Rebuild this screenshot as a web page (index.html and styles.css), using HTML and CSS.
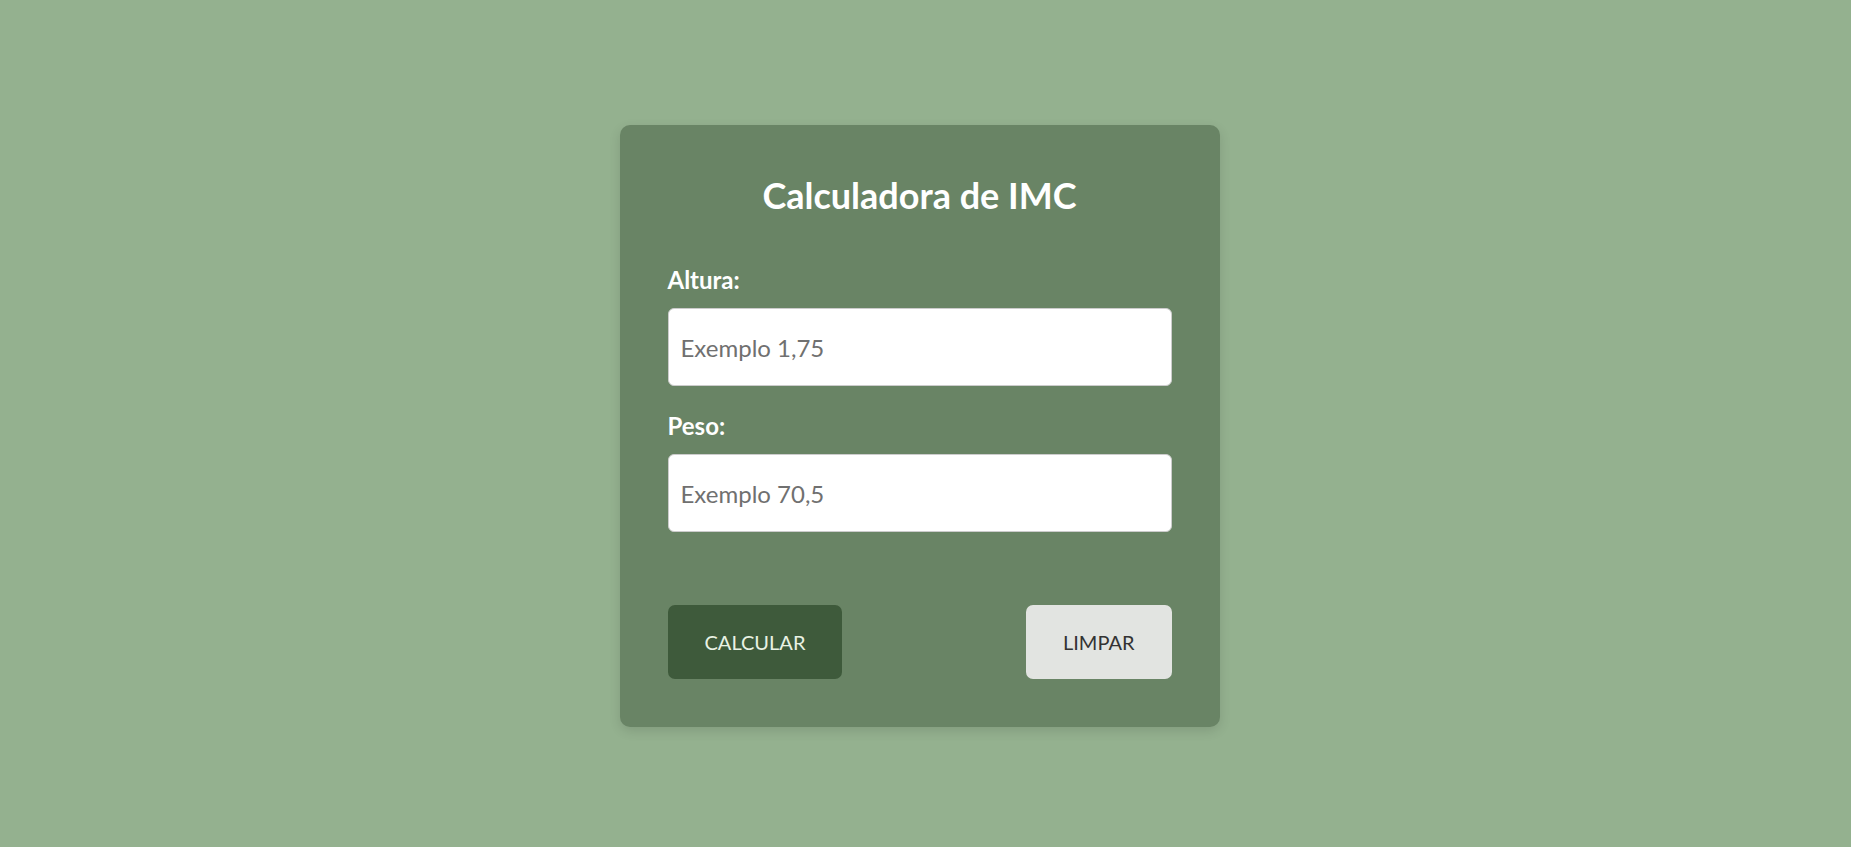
FILE: index.html
```html
<!DOCTYPE html>
<html lang="pt-BR">
<head>
<meta charset="utf-8">
<title>Calculadora de IMC</title>
<link rel="stylesheet" href="styles.css">
</head>
<body>
<main class="page">
  <section class="card">
    <h1 class="title">Calculadora de IMC</h1>
    <div class="field">
      <label class="label" for="altura">Altura:</label>
      <input class="input" id="altura" type="text" placeholder="Exemplo 1,75">
    </div>
    <div class="field">
      <label class="label" for="peso">Peso:</label>
      <input class="input" id="peso" type="text" placeholder="Exemplo 70,5">
    </div>
    <div class="actions">
      <button class="btn btn-primary" type="button">CALCULAR</button>
      <button class="btn btn-secondary" type="button">LIMPAR</button>
    </div>
  </section>
</main>
</body>
</html>
```
FILE: styles.css
```css
* { box-sizing: border-box; }
html, body { margin: 0; padding: 0; }
body {
  background: #94b18f;
  font-family: Lato, "Open Sans", sans-serif;
  min-height: 847px;
}
.page {
  display: flex;
  justify-content: center;
  padding-top: 125px;
  padding-right: 12px;
}
.card {
  width: 600px;
  background: #698465;
  border-radius: 10px;
  padding: 49px 48px 48px;
  box-shadow: 0 4px 12px rgba(0,0,0,0.12);
}
.title {
  margin: 0 0 47px;
  text-align: center;
  color: #fff;
  font-size: 36px;
  font-weight: 700;
  line-height: 1.2;
}
.field {
  display: flex;
  flex-direction: column;
  margin-bottom: 24px;
}
.label {
  color: #fff;
  font-size: 24px;
  font-weight: 700;
  line-height: 32px;
  margin-bottom: 12px;
}
.input {
  height: 78px;
  width: 100%;
  border: 1px solid #ccc;
  border-radius: 6px;
  padding: 0 12px;
  font-family: Lato, sans-serif;
  font-size: 24px;
  color: #333;
  background: #fff;
  outline: none;
}
.input::placeholder { color: #707070; }
.actions {
  display: flex;
  justify-content: space-between;
  margin-top: 73px;
}
.btn {
  height: 74px;
  border: none;
  border-radius: 7px;
  font-family: Lato, sans-serif;
  font-size: 20px;
  padding: 0 37px;
  cursor: pointer;
}
.btn-primary {
  background: #3e5a3b;
  color: #e9f2e4;
}
.btn-secondary {
  background: #e2e4e1;
  color: #333;
}
```
